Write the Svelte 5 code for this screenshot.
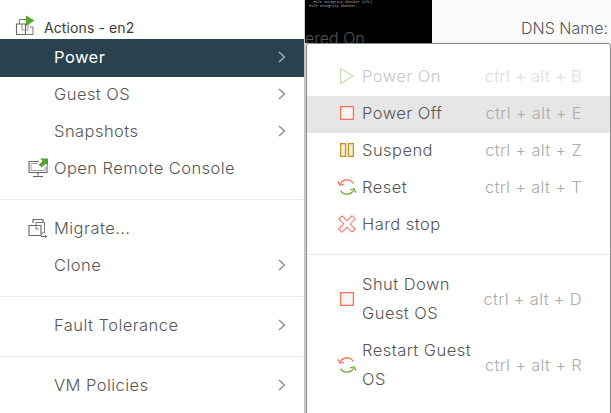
<script lang="ts">
	const groups = [
		[
			{ label: 'Power', more: true, active: true },
			{ label: 'Guest OS', more: true },
			{ label: 'Snapshots', more: true },
			{ label: 'Open Remote Console', icon: 'console' }
		],
		[
			{ label: 'Migrate...', icon: 'migrate' },
			{ label: 'Clone', more: true }
		],
		[{ label: 'Fault Tolerance', more: true }],
		[{ label: 'VM Policies', more: true }]
	];

	const powerTop = [
		{ label: 'Power On', keys: 'ctrl + alt + B', icon: 'play', disabled: true },
		{ label: 'Power Off', keys: 'ctrl + alt + E', icon: 'stop', hover: true },
		{ label: 'Suspend', keys: 'ctrl + alt + Z', icon: 'pause' },
		{ label: 'Reset', keys: 'ctrl + alt + T', icon: 'reset' },
		{ label: 'Hard stop', keys: '', icon: 'cross' }
	];
	const powerGuest = [
		{ label: 'Shut Down Guest OS', keys: 'ctrl + alt + D', icon: 'stop' },
		{ label: 'Restart Guest OS', keys: 'ctrl + alt + R', icon: 'reset' }
	];
</script>

{#snippet powerIcon(name: string)}
	<svg class="picon" width="20" height="20" viewBox="0 0 20 20" fill="none">
		{#if name === 'play'}
			<path d="M3.5 2.5 L16 10 L3.5 17.5 Z" stroke="#c8e0ae" stroke-width="1.3" />
		{:else if name === 'stop'}
			<rect x="3.6" y="3.6" width="12.8" height="12.8" stroke="#f5735e" stroke-width="1.3" fill="#fdf3f1" />
		{:else if name === 'pause'}
			<rect x="3.6" y="3.6" width="5" height="12.8" stroke="#c2941f" stroke-width="1.3" fill="#f6ecd2" />
			<rect x="11.4" y="3.6" width="5" height="12.8" stroke="#c2941f" stroke-width="1.3" fill="#f6ecd2" />
		{:else if name === 'reset'}
			<path d="M3.4 6.6 A7.6 7.6 0 0 1 16.4 6.4" stroke="#f5694f" stroke-width="1.2" />
			<path d="M1 4.4 L3 8.2 L7 7" stroke="#f5694f" stroke-width="1.2" />
			<path d="M3.6 13.6 A7.6 7.6 0 0 0 16.6 13.4" stroke="#6cab2e" stroke-width="1.2" />
			<path d="M13 13 L17 11.8 L19 15.6" stroke="#6cab2e" stroke-width="1.2" />
		{:else if name === 'cross'}
			<path
				d="M5 1.8 L10 6.8 L15 1.8 L18.2 5 L13.2 10 L18.2 15 L15 18.2 L10 13.2 L5 18.2 L1.8 15 L6.8 10 L1.8 5 Z"
				stroke="#f5735e"
				stroke-width="1.3"
				stroke-dasharray="2 0.5"
			/>
		{/if}
	</svg>
{/snippet}

<div class="page">
	<nav class="menu">
		<header class="title">
			<svg width="20" height="21" viewBox="0 0 20 21" fill="none">
				<path d="M1.5 9 H10.5 V19.5 H1.5 Z" stroke="#666" stroke-width="1.1" />
				<path d="M4.5 9 V4.5 H11 M15 12 H18 V19.5 H10.5" stroke="#777" stroke-width="1" />
				<path d="M7 9 V15 H13 V9" stroke="#888" stroke-width="0.9" />
				<path d="M11 0.5 L19.5 5.5 L11 11 Z" fill="#53a52b" />
			</svg>
			<span>Actions - en2</span>
		</header>

		{#each groups as group, i}
			{#if i > 0}<hr />{/if}
			<ul class="group">
				{#each group as item}
					<li class="row" class:active={item.active}>
						<span class="lead">
							{#if item.icon === 'console'}
								<svg width="21" height="20" viewBox="0 0 21 20" fill="none">
									<path d="M11 3.5 H1 V14.5 H19 V8" stroke="#666" stroke-width="1.1" />
									<path d="M3 12.5 V5.5 H10 M3 12.5 H17 V9" stroke="#999" stroke-width="0.9" />
									<path d="M10 17.5 V14.5 M5 18.5 H15" stroke="#666" stroke-width="1.1" />
									<path d="M12 0.5 H20 V8 L17.6 5.8 L13.6 9.6 L10.8 6.8 L14.6 3 Z" fill="#53a52b" />
								</svg>
							{:else if item.icon === 'migrate'}
								<svg width="20" height="20" viewBox="0 0 20 20" fill="none">
									<path d="M5 5 V1.5 H15 V4 M1 7.5 H13 V17.5 H1 Z" stroke="#666" stroke-width="1.1" />
									<path d="M8 4.5 H16.5 V15 H13 M8 4.5 V11 H11" stroke="#777" stroke-width="1" />
									<path d="M13 18.5 H18" stroke="#666" stroke-width="1" />
									<path d="M17 16.8 L19.4 18.5 L17 20 Z" fill="#666" />
								</svg>
							{/if}
						</span>
						<span class="text">{item.label}</span>
						{#if item.more}
							<svg class="chev" width="8" height="12" viewBox="0 0 8 12" fill="none">
								<path d="M1 1 L6.5 6 L1 11" stroke-width="1.3" />
							</svg>
						{/if}
					</li>
				{/each}
			</ul>
		{/each}
	</nav>

	<div class="backdrop">
		<div class="console">
			<pre>    File Integrity Checker (sfc)
  File Integrity Checker.</pre>
			<span class="state">ered On</span>
		</div>
		<span class="dns">DNS Name:</span>
	</div>

	<div class="submenu">
		<ul class="sub-group first">
			{#each powerTop as item}
				<li class="sub-row" class:disabled={item.disabled} class:hover={item.hover}>
					{@render powerIcon(item.icon)}
					<span class="sub-label">{item.label}</span>
					<span class="keys">{item.keys}</span>
				</li>
			{/each}
		</ul>
		<hr />
		<ul class="sub-group second">
			{#each powerGuest as item}
				<li class="sub-row tall">
					{@render powerIcon(item.icon)}
					<span class="sub-label">{item.label}</span>
					<span class="keys">{item.keys}</span>
				</li>
			{/each}
		</ul>
	</div>
</div>

<style>
	:global(body) {
		margin: 0;
		background: #fff;
	}

	.page {
		position: relative;
		display: flex;
		width: 611px;
		height: 413px;
		overflow: hidden;
		background: #fafafa;
		font-family: 'Inter', 'Liberation Sans', sans-serif;
		font-size: 16.5px;
		font-weight: 300;
		letter-spacing: 0.45px;
		color: #565656;
	}

	ul {
		margin: 0;
		padding: 0;
		list-style: none;
	}

	hr {
		height: 1px;
		margin: 0;
		border: 0;
		background: #eaeaea;
	}

	.menu {
		flex: none;
		width: 305px;
		background: #fff;
		border-right: 1px solid #d0d0d0;
		box-sizing: border-box;
	}

	.title {
		display: flex;
		align-items: flex-end;
		gap: 9px;
		height: 39px;
		padding: 0 0 3px 15px;
		box-sizing: border-box;
		font-size: 14px;
		font-weight: 400;
		letter-spacing: 0.1px;
		color: #3a3a3a;
	}

	.title span {
		line-height: 16px;
	}

	.group {
		padding: 11px 0;
	}

	.menu .title + .group {
		padding-top: 0;
	}

	.row {
		display: flex;
		align-items: center;
		height: 37px;
		padding: 0 18px 3px 28px;
		box-sizing: border-box;
	}

	.row.active {
		height: 38px;
		background: #2a4250;
		color: #fff;
		font-weight: 400;
	}

	.lead {
		display: flex;
		align-items: center;
		width: 26px;
		flex: none;
	}

	.text {
		flex: 1;
	}

	.chev {
		stroke: #8a8a8a;
	}

	.active .chev {
		stroke: #a9b4bb;
	}

	.backdrop {
		flex: 1;
		display: flex;
		align-items: flex-start;
		font-size: 16px;
		letter-spacing: 0;
	}

	.console {
		width: 127px;
		height: 43px;
		background: #000;
		overflow: hidden;
	}

	.console pre {
		margin: 0;
		height: 8px;
		font-family: 'Liberation Mono', monospace;
		font-size: 3.5px;
		line-height: 4px;
		color: #bbb;
	}

	.state {
		display: block;
		margin-top: 20px;
		color: #555;
		white-space: nowrap;
	}

	.dns {
		margin: 18px 0 0 89px;
		white-space: nowrap;
		color: #575757;
	}

	.submenu {
		position: absolute;
		top: 43px;
		left: 306px;
		right: 0;
		bottom: -20px;
		background: #fff;
		border: 1px solid #8c8c8c;
		border-radius: 3px;
		box-shadow: -1px 0 2px rgba(0, 0, 0, 0.25);
		box-sizing: border-box;
	}

	.sub-group.first {
		padding: 15px 0 10px;
	}

	.sub-group.second {
		padding-top: 11px;
	}

	.sub-row {
		display: flex;
		align-items: center;
		height: 37px;
		padding: 0 28px 3px 30px;
		box-sizing: border-box;
	}

	.sub-row.tall {
		height: 66px;
		line-height: 29px;
		padding-bottom: 0;
	}

	.sub-row.hover {
		background: #e6e6e6;
	}

	.picon {
		flex: none;
		margin-right: 5px;
	}

	.sub-label {
		flex: none;
		width: 115px;
	}

	.keys {
		flex: 1;
		text-align: right;
		white-space: nowrap;
		letter-spacing: 0.3px;
		color: #ababab;
	}

	.disabled .sub-label {
		color: #c6c6c6;
	}

	.disabled .keys {
		color: #dcdcdc;
	}
</style>
